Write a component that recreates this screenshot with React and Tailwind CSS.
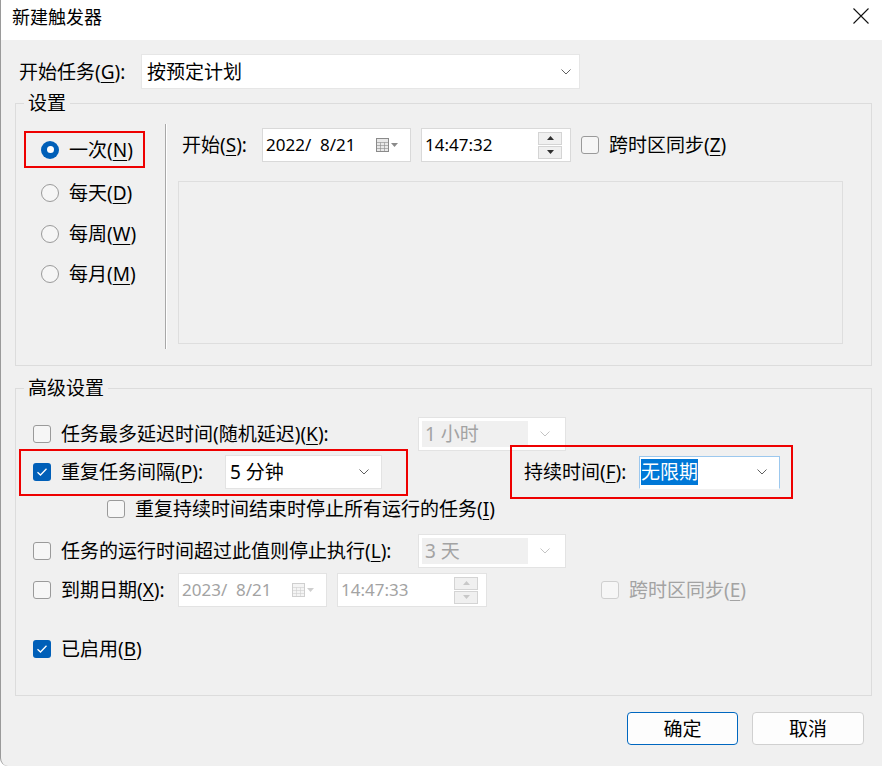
import React from "react";

const font = "font-['Noto_Sans','Noto_Sans_CJK_SC',sans-serif]";

function U({ children }) {
  return <span className="underline underline-offset-[3px] decoration-1">{children}</span>;
}

function Chevron({ color = "#606060" }) {
  return (
    <svg width="10" height="6" viewBox="0 0 10 6" fill="none">
      <path d="M0.5 0.5 L5 5 L9.5 0.5" stroke={color} strokeWidth="1" />
    </svg>
  );
}

function Check({ checked, disabled }) {
  if (checked) {
    return (
      <div className="w-[18px] h-[18px] rounded-[3px] bg-[#005fb8] flex items-center justify-center shrink-0">
        <svg width="12" height="10" viewBox="0 0 12 10" fill="none">
          <path d="M1.5 5.2 L4.5 8 L10.5 1.8" stroke="white" strokeWidth="1.3" />
        </svg>
      </div>
    );
  }
  return (
    <div
      className={`w-[18px] h-[18px] rounded-[3px] border shrink-0 bg-[#f6f6f6] ${
        disabled ? "border-[#cfcfcf]" : "border-[#9a9a9a]"
      }`}
    />
  );
}

function Radio({ checked }) {
  if (checked) {
    return (
      <div className="w-[18px] h-[18px] rounded-full bg-[#005fb8] flex items-center justify-center shrink-0">
        <div className="w-[7px] h-[7px] rounded-full bg-white" />
      </div>
    );
  }
  return <div className="w-[18px] h-[18px] rounded-full border border-[#9a9a9a] bg-[#f6f6f6] shrink-0" />;
}

function Combo({ w, h = 34, children, focus }) {
  return (
    <div
      className={`bg-white border flex items-center justify-between pr-[12px] ${
        focus ? "border-[#9cc8ee] border-b-white pl-[1px]" : "border-[#e3e3e3] pl-[4px]"
      }`}
      style={{ width: w, height: h }}
    >
      <div className="flex items-center h-full">{children}</div>
      <Chevron />
    </div>
  );
}

function DisabledCombo({ w, children }) {
  return (
    <div className="bg-white border border-[#e3e3e3] flex items-center p-[3px] h-[34px]" style={{ width: w }}>
      <div className="flex-1 h-full bg-[#f0f0f0] text-[#a3a3a3] flex items-center pl-[3px]">{children}</div>
      <div className="w-[34px] flex justify-center">
        <Chevron color="#c4c4c4" />
      </div>
    </div>
  );
}

function CalIcon({ disabled }) {
  const c = disabled ? "#cfcfcf" : "#8a8a8a";
  return (
    <div className="flex items-center gap-[2px]">
      <svg width="13" height="14" viewBox="0 0 13 14">
        <rect x="0.5" y="0.5" width="12" height="13" fill={disabled ? "#f4f4f4" : "#e8e8e8"} stroke={c} />
        <path d="M0.5 4.5 H12.5 M0.5 7.5 H12.5 M0.5 10.5 H12.5 M4.5 4.5 V13.5 M8.5 4.5 V13.5" stroke={c} strokeWidth="0.6" />
      </svg>
      <svg width="7" height="4" viewBox="0 0 7 4">
        <path d="M0 0 H7 L3.5 4 Z" fill={c} />
      </svg>
    </div>
  );
}

function DateBox({ value, disabled }) {
  return (
    <div
      className={`w-[149px] h-[34px] bg-white border flex items-center justify-between pl-[3px] pr-[12px] ${
        disabled ? "border-[#e3e3e3] text-[#a3a3a3]" : "border-[#d9d9d9]"
      }`}
    >
      <span className="text-[17px] whitespace-pre">{value}</span>
      <CalIcon disabled={disabled} />
    </div>
  );
}

function TimeBox({ value, disabled }) {
  const c = disabled ? "#c8c8c8" : "#303030";
  return (
    <div
      className={`w-[150px] h-[34px] bg-white border flex items-center justify-between pl-[3px] pr-[8px] ${
        disabled ? "border-[#e3e3e3] text-[#a3a3a3]" : "border-[#d9d9d9]"
      }`}
    >
      <span className="text-[17px]">{value}</span>
      <div className="flex flex-col gap-[1px]">
        <div className="w-[24px] h-[13px] border border-[#d4d4d4] bg-[#f0f0f0] flex items-center justify-center">
          <svg width="7" height="4" viewBox="0 0 7 4">
            <path d="M0 4 H7 L3.5 0 Z" fill={c} />
          </svg>
        </div>
        <div className="w-[24px] h-[13px] border border-[#d4d4d4] bg-[#f0f0f0] flex items-center justify-center">
          <svg width="7" height="4" viewBox="0 0 7 4">
            <path d="M0 0 H7 L3.5 4 Z" fill={c} />
          </svg>
        </div>
      </div>
    </div>
  );
}

export default function App() {
  return (
    <div
      className={`w-[882px] h-[766px] bg-[#f0f0f0] text-[19px] leading-[24px] text-black overflow-hidden border-l border-[#9a9a9a] rounded-bl-[8px] ${font}`}
    >
      {/* 标题栏 */}
      <div className="h-[40px] bg-white flex items-center justify-between pl-[12px] pr-[13px] -ml-px">
        <span className="text-[18px] -mt-[6px]">新建触发器</span>
        <svg width="16" height="16" viewBox="0 0 16 16" className="-mt-[8px]">
          <path d="M0.5 0.5 L15.5 15.5 M15.5 0.5 L0.5 15.5" stroke="#111" strokeWidth="1.1" />
        </svg>
      </div>

      {/* 开始任务 */}
      <div className="mt-[14px] h-[35px] flex items-center">
        <span className="ml-[18px] w-[122px]">
          开始任务(<U>G</U>):
        </span>
        <div className="w-[439px] h-[35px] bg-white border border-[#e6e6e6] flex items-center justify-between pl-[5px] pr-[8px]">
          <span>按预定计划</span>
          <Chevron />
        </div>
      </div>

      {/* 设置 */}
      <fieldset className="mt-[2px] ml-[14px] w-[857px] h-[275px] border border-[#dcdcdc] min-w-0">
        <legend className="ml-[8px] px-[4px] leading-[24px]">设置</legend>
        <div className="flex">
          <div className="w-[149px] pl-[8px] pt-[16px]">
            <div className="w-[121px] h-[37px] border-2 border-[#ee0000] flex items-center pl-[15px] gap-[10px]">
              <Radio checked />
              <span>
                一次(<U>N</U>)
              </span>
            </div>
            <div className="mt-[4px] h-[41px] flex items-center pl-[17px] gap-[10px]">
              <Radio />
              <span>
                每天(<U>D</U>)
              </span>
            </div>
            <div className="h-[41px] flex items-center pl-[17px] gap-[10px]">
              <Radio />
              <span>
                每周(<U>W</U>)
              </span>
            </div>
            <div className="h-[40px] flex items-center pl-[17px] gap-[10px]">
              <Radio />
              <span>
                每月(<U>M</U>)
              </span>
            </div>
          </div>
          <div className="mt-[9px] h-[225px] w-[2px] border-l border-[#a8a8a8] border-r border-r-white" />
          <div className="ml-[11px] pt-[13px]">
            <div className="h-[34px] flex items-center">
              <span className="pl-[4px] w-[84px]">
                开始(<U>S</U>):
              </span>
              <DateBox value="2022/  8/21" />
              <div className="ml-[10px]">
                <TimeBox value="14:47:32" />
              </div>
              <div className="ml-[10px] flex items-center gap-[10px]">
                <Check />
                <span>
                  跨时区同步(<U>Z</U>)
                </span>
              </div>
            </div>
            <div className="mt-[19px] w-[665px] h-[163px] border border-[#dedede]" />
          </div>
        </div>
      </fieldset>

      {/* 高级设置 */}
      <fieldset className="mt-[10px] ml-[14px] w-[857px] h-[320px] border border-[#dcdcdc] min-w-0">
        <legend className="ml-[8px] px-[4px] leading-[24px]">高级设置</legend>

        <div className="mt-[16px] h-[35px] flex items-center pl-[17px]">
          <Check />
          <span className="ml-[10px] w-[357px]">
            任务最多延迟时间(随机延迟)(<U>K</U>):
          </span>
          <DisabledCombo w={148}>1 小时</DisabledCombo>
        </div>

        <div className="-mt-[6px] h-[54px] flex items-center">
          <div className="ml-[3px] w-[389px] h-[47px] border-2 border-[#ee0000] flex items-center pl-[12px]">
            <Check checked />
            <span className="ml-[10px] w-[164px]">
              重复任务间隔(<U>P</U>):
            </span>
            <Combo w={157} h={34}>
              <span>5 分钟</span>
            </Combo>
          </div>
          <div className="ml-[102px] w-[283px] h-[54px] border-2 border-[#ee0000] flex items-center pl-[12px]">
            <span className="w-[115px]">
              持续时间(<U>F</U>):
            </span>
            <Combo w={141} h={33} focus>
              <span className="bg-[#0078d7] text-white leading-[26px]">无限期</span>
            </Combo>
          </div>
        </div>

        <div className="h-[20px] flex items-center pl-[91px]">
          <Check />
          <span className="ml-[10px]">
            重复持续时间结束时停止所有运行的任务(<U>I</U>)
          </span>
        </div>

        <div className="mt-[15px] h-[34px] flex items-center pl-[17px]">
          <Check />
          <span className="ml-[10px] w-[357px]">
            任务的运行时间超过此值则停止执行(<U>L</U>):
          </span>
          <DisabledCombo w={148}>3 天</DisabledCombo>
        </div>

        <div className="mt-[5px] h-[34px] flex items-center pl-[17px]">
          <Check />
          <span className="ml-[10px] w-[117px]">
            到期日期(<U>X</U>):
          </span>
          <DateBox value="2023/  8/21" disabled />
          <div className="ml-[10px]">
            <TimeBox value="14:47:33" disabled />
          </div>
          <div className="ml-[114px] flex items-center gap-[10px] text-[#a3a3a3]">
            <Check disabled />
            <span>
              跨时区同步(<U>E</U>)
            </span>
          </div>
        </div>

        <div className="mt-[33px] h-[18px] flex items-center pl-[17px]">
          <Check checked />
          <span className="ml-[10px]">
            已启用(<U>B</U>)
          </span>
        </div>
      </fieldset>

      {/* 按钮 */}
      <div className="mt-[16px] flex justify-end gap-[14px] pr-[18px]">
        <button className="w-[111px] h-[33px] rounded-[4px] border border-[#0067c0] bg-[#fdfdfd] flex items-center justify-center">
          确定
        </button>
        <button className="w-[112px] h-[33px] rounded-[4px] border border-[#d0d0d0] bg-[#fdfdfd] flex items-center justify-center">
          取消
        </button>
      </div>
    </div>
  );
}
